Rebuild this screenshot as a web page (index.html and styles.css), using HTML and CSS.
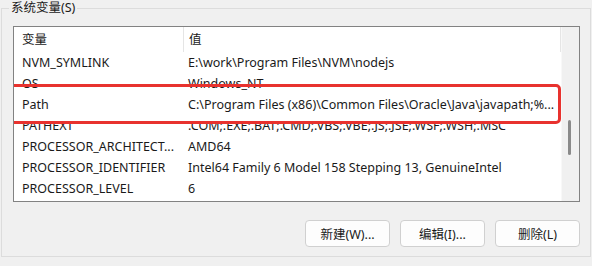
FILE: index.html
```html
<!DOCTYPE html>
<html lang="zh-CN">
<head>
    <meta charset="UTF-8">
    <title>系统变量</title>
    <link rel="stylesheet" href="styles.css">
</head>
<body>
    <fieldset class="group">
        <legend class="group-title">系统变量(S)</legend>

        <div class="list">
            <div class="list-table">
                <div class="row head">
                    <div class="col-name">变量</div>
                    <div class="col-value">值</div>
                </div>
                <div class="row"><div class="col-name">NVM_SYMLINK</div><div class="col-value">E:\work\Program Files\NVM\nodejs</div></div>
                <div class="row"><div class="col-name">OS</div><div class="col-value">Windows_NT</div></div>
                <div class="row"><div class="col-name">Path</div><div class="col-value">C:\Program Files (x86)\Common Files\Oracle\Java\javapath;%...</div></div>
                <div class="row"><div class="col-name">PATHEXT</div><div class="col-value">.COM;.EXE;.BAT;.CMD;.VBS;.VBE;.JS;.JSE;.WSF;.WSH;.MSC</div></div>
                <div class="row"><div class="col-name">PROCESSOR_ARCHITECT...</div><div class="col-value">AMD64</div></div>
                <div class="row"><div class="col-name">PROCESSOR_IDENTIFIER</div><div class="col-value">Intel64 Family 6 Model 158 Stepping 13, GenuineIntel</div></div>
                <div class="row"><div class="col-name">PROCESSOR_LEVEL</div><div class="col-value">6</div></div>

                <!-- marca roja sobre la fila Path -->
                <div class="highlight"></div>
            </div>
            <div class="scrollbar">
                <div class="thumb"></div>
            </div>
        </div>

        <div class="buttons">
            <button class="btn">新建(W)...</button>
            <button class="btn">编辑(I)...</button>
            <button class="btn">删除(L)</button>
        </div>
    </fieldset>
</body>
</html>
```

FILE: styles.css
```css
html, body {
    margin: 0;
    padding: 0;
}
body {
    width: 592px;
    height: 266px;
    overflow: hidden;
    background: #f0f0f0;
    font-family: "Noto Sans", "Noto Sans CJK SC", sans-serif;
    font-size: 12.5px;
    color: #1a1a1a;
}

.group {
    margin: 0 1px;
    padding: 0 10px 15px 11px;
    border: 1px solid #dcdcdc;
    height: 240px;
}
.group-title {
    margin-left: -4px;
    padding: 0 2px;
    line-height: 16px;
    color: #1a1a1a;
}

.list {
    margin-top: 10px;
    height: 174px;
    border: 1px solid #828282;
    background: #fff;
    display: flex;
}
.list-table {
    flex: 1;
    position: relative;
    overflow: hidden;
}
.row {
    display: flex;
    height: 21px;
    line-height: 21px;
    white-space: nowrap;
}
.row.head {
    height: 25px;
    line-height: 25px;
    border-right: 1px solid #e5e5e5;
}
.col-name {
    width: 161px;
    padding-left: 8px;
    flex: none;
}
.col-value {
    padding-left: 5px;
}
.head .col-name {
    border-right: 1px solid #e5e5e5;
}

.highlight {
    position: absolute;
    left: -7px;
    top: 57px;
    width: 548px;
    height: 34px;
    border: 3px solid #e8322e;
    border-radius: 5px;
}

.scrollbar {
    width: 17px;
    background: #f0f0f0;
    border-left: 1px solid #f8f8f8;
    position: relative;
}
.thumb {
    position: absolute;
    left: 6px;
    top: 93px;
    width: 3px;
    height: 35px;
    border-radius: 2px;
    background: #8a8a8a;
}

.buttons {
    display: flex;
    justify-content: flex-end;
    gap: 10px;
    margin-top: 18px;
}
.btn {
    width: 85px;
    height: 27px;
    border: 1px solid #d0d0d0;
    border-radius: 4px;
    background: #fdfdfd;
    font-family: inherit;
    font-size: 12.5px;
    color: #1a1a1a;
    padding: 0;
}
```
